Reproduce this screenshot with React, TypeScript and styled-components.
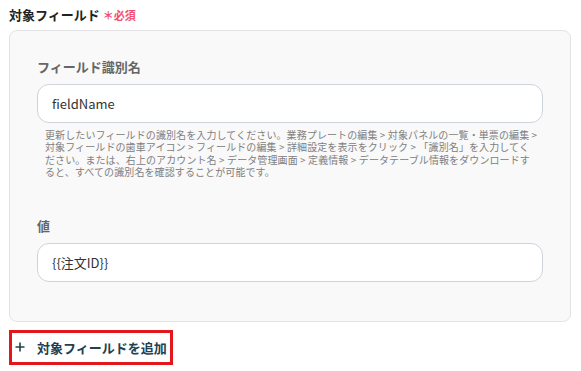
import {createGlobalStyle, styled} from "styled-components";

const GlobalStyle = createGlobalStyle`
    body {
        margin: 0;
        background: #ffffff;
        font-family: "Noto Sans CJK JP", "Noto Sans", sans-serif;
    }
`

const Page = styled.div`
    padding: 6px 10px 0 9px;
    width: 562px;
`

const Title = styled.div`
    display: flex;
    align-items: center;
    gap: 3px;
    height: 18px;
    font-size: 13px;
    line-height: 18px;
    font-weight: bold;
    color: #222;
    margin-bottom: 6px;

    .required {
        font-size: 11px;
        font-weight: bold;
        color: #f0506e;
    }
`

const Panel = styled.div`
    background: #f9f9f9;
    border: 1px solid #e3e3e6;
    border-radius: 8px;
    padding: 27px 27px 39px;
`

const Label = styled.div<{ $top?: number }>`
    font-size: 13px;
    line-height: 18px;
    font-weight: bold;
    color: #666;
    margin-top: ${p => p.$top ?? 0}px;
    margin-bottom: 8px;
`

const Input = styled.div`
    height: 37px;
    background: #fff;
    border: 1px solid #cfd3dc;
    border-radius: 12px;
    display: flex;
    align-items: center;
    padding: 0 14px;
    font-size: 13px;
    color: #333;
`

const Help = styled.div`
    margin-top: 6px;
    padding-left: 8px;
    font-size: 10px;
    line-height: 12.4px;
    letter-spacing: 0.1px;
    color: #808080;
    white-space: nowrap;
`

const AddButton = styled.div`
    margin-top: 8px;
    width: 156px;
    height: 29px;
    border: 3px solid #e3161b;
    display: flex;
    align-items: center;
    gap: 12px;
    padding-left: 2px;
    font-size: 13px;
    font-weight: bold;
    color: #23404f;

    svg {
        margin-left: 1px;
    }
`

export default function App() {
    return (
        <>
            <GlobalStyle/>
            <Page>
                <Title>
                    対象フィールド
                    <span className={'required'}>＊必須</span>
                </Title>
                <Panel>
                    <Label>フィールド識別名</Label>
                    <Input>fieldName</Input>
                    <Help>
                        更新したいフィールドの識別名を入力してください。業務プレートの編集 &gt; 対象パネルの一覧・単票の編集 &gt;<br/>
                        対象フィールドの歯車アイコン &gt; フィールドの編集 &gt; 詳細設定を表示をクリック &gt; 「識別名」を入力してく<br/>
                        ださい。または、右上のアカウント名 &gt; データ管理画面 &gt; 定義情報 &gt; データテーブル情報をダウンロードす<br/>
                        ると、すべての識別名を確認することが可能です。
                    </Help>
                    <Label $top={38}>値</Label>
                    <Input>{'{{注文ID}}'}</Input>
                </Panel>
                <AddButton>
                    <svg width="10" height="10" viewBox="0 0 10 10">
                        <path d="M5 0.5V9.5M0.5 5H9.5" stroke="#23404f" strokeWidth="1.6" fill="none"/>
                    </svg>
                    対象フィールドを追加
                </AddButton>
            </Page>
        </>
    )
}
